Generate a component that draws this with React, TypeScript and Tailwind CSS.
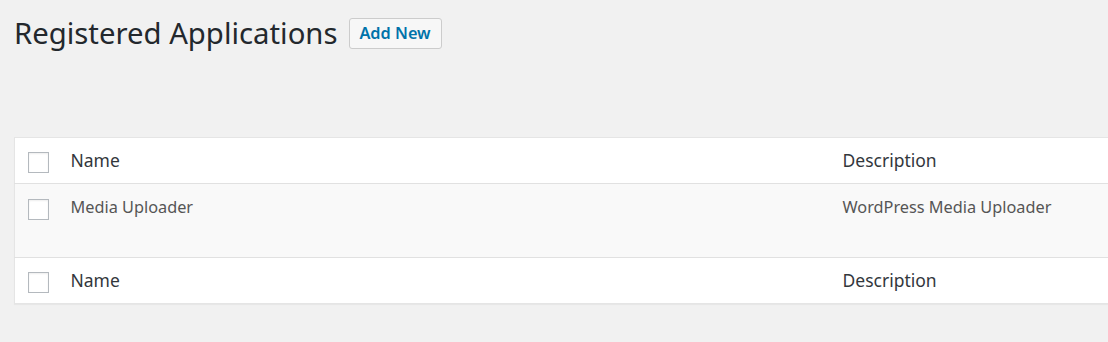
import React from 'react';

const Checkbox = () => (
  <span className="block w-[21px] h-[21px] border border-[#b4b9be] bg-white shadow-[inset_0_1px_2px_rgba(0,0,0,0.07)]" />
);

const HeadRow = ({ top }: { top?: boolean }) => (
  <tr className={`h-[46px] ${top ? 'border-b border-[#e1e1e1]' : 'border-t border-[#e1e1e1]'}`}>
    <td className="w-[43px] pl-[13px] pt-[14px] align-top">
      <Checkbox />
    </td>
    <th className="text-left font-normal text-[17.5px] leading-[24px] text-[#32373c] pl-[13px] pt-[10px] align-top w-[772px]">
      Name
    </th>
    <th className="text-left font-normal text-[17.5px] leading-[24px] text-[#32373c] pl-[13px] pt-[10px] align-top">
      Description
    </th>
  </tr>
);

export default function App() {
  return (
    <div className="w-[1108px] h-[342px] overflow-hidden bg-[#f1f1f1] font-['Noto_Sans',sans-serif]">
      <div className="flex items-center gap-[11px] pl-[14px] pt-[15px]">
        <h1 className="text-[29.3px] leading-[36px] text-[#23282d]">Registered Applications</h1>
        <button className="h-[31px] w-[93px] rounded-[3px] border border-[#ccc] bg-[#f7f7f7] text-[16.3px] font-semibold text-[#0073aa]">
          Add New
        </button>
      </div>
      <div className="pl-[14px] pt-[86px]">
        <table className="w-[1120px] border border-[#e5e5e5] bg-white shadow-[0_1px_1px_rgba(0,0,0,0.04)] border-collapse">
          <thead>
            <HeadRow top />
          </thead>
          <tbody>
            <tr className="bg-[#f9f9f9] h-[74px]">
              <td className="pl-[13px] pt-[15px] align-top">
                <Checkbox />
              </td>
              <td className="pl-[13px] pt-[12px] align-top text-[16.3px] leading-[22px] text-[#555]">Media Uploader</td>
              <td className="pl-[13px] pt-[12px] align-top text-[16.3px] leading-[22px] text-[#555]">WordPress Media Uploader</td>
            </tr>
          </tbody>
          <tfoot>
            <HeadRow />
          </tfoot>
        </table>
      </div>
    </div>
  );
}
